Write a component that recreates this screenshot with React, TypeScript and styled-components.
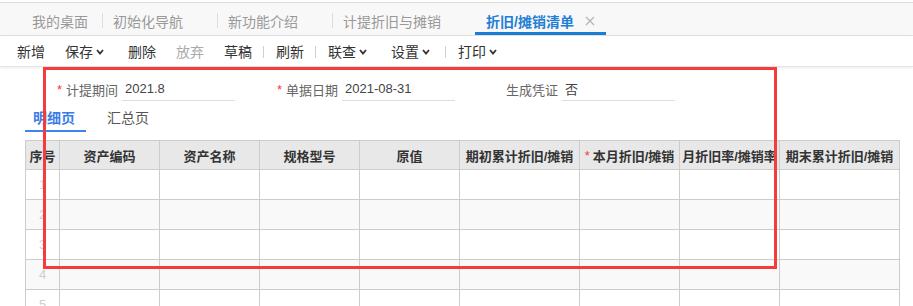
import React from "react";
import styled, { createGlobalStyle } from "styled-components";

const GlobalStyle = createGlobalStyle`
  html, body {
    margin: 0;
    padding: 0;
    background: #fff;
  }
  body {
    font-family: "Liberation Sans", "Noto Sans CJK SC", sans-serif;
    color: #333;
  }
`;

const Page = styled.div`
  position: relative;
  width: 913px;
  height: 306px;
  overflow: hidden;
  padding-top: 2px;
  box-sizing: border-box;
`;

const TabBar = styled.div`
  display: flex;
  height: 34px;
  box-sizing: border-box;
  border-top: 1px solid #dcdcdc;
  border-bottom: 1px solid #e2e2e2;
  background: #f8f8f8;
  padding-left: 21px;
`;

const Tab = styled.div<{ $active?: boolean; $padRight: number; $padLeft: number }>`
  display: flex;
  align-items: center;
  height: 32px;
  box-sizing: border-box;
  padding: 6px ${({ $padRight }) => $padRight}px 0 ${({ $padLeft }) => $padLeft}px;
  border-bottom: 3px solid ${({ $active }) => ($active ? "#1a7fd4" : "transparent")};
  font-size: 14px;
  white-space: nowrap;
  color: ${({ $active }) => ($active ? "#1f7fd6" : "#999")};
  font-weight: ${({ $active }) => ($active ? "bold" : "normal")};
`;

const TabSep = styled.span`
  width: 1px;
  height: 15px;
  margin-top: 10px;
  background: #dddddd;
`;

const CloseIcon = styled.svg`
  margin-left: 11px;
`;

const Toolbar = styled.div`
  display: flex;
  align-items: center;
  height: 31px;
  box-sizing: border-box;
  padding-left: 7px;
  border-bottom: 1px solid #e4e4e4;
  box-shadow: 0 1px 3px rgba(0, 0, 0, 0.08);
`;

const ToolButton = styled.div<{ $disabled?: boolean; $drop?: boolean }>`
  display: flex;
  align-items: center;
  padding: 0 ${({ $drop }) => ($drop ? 14 : 10)}px 0 10px;
  font-size: 14px;
  white-space: nowrap;
  color: ${({ $disabled }) => ($disabled ? "#aaa" : "#333")};
`;

const Chevron = styled.svg`
  margin-left: 3px;
  margin-top: 1px;
`;

const ToolSep = styled.span`
  width: 1px;
  height: 12px;
  margin: 1px 2px 0 1px;
  background: #d0d0d0;
`;

const FormRow = styled.div`
  display: flex;
  padding: 10px 0 0 57px;
`;

const Field = styled.div`
  display: flex;
  align-items: center;
  width: 220px;
  height: 24px;
`;

const Star = styled.span<{ $hidden?: boolean }>`
  width: 9px;
  font-size: 13px;
  color: #f33;
  visibility: ${({ $hidden }) => ($hidden ? "hidden" : "visible")};
`;

const FieldLabel = styled.span`
  font-size: 13px;
  color: #666;
  white-space: nowrap;
`;

const FieldInput = styled.div`
  display: flex;
  align-items: center;
  width: 113px;
  height: 24px;
  margin-left: 4px;
  padding-left: 3px;
  box-sizing: border-box;
  border-bottom: 1px solid #dddddd;
  font-size: 13px;
  color: #444;
`;

const SubTabs = styled.div`
  display: flex;
  gap: 13px;
  margin: 2px 0 0 25px;
`;

const SubTab = styled.div<{ $active?: boolean }>`
  display: flex;
  align-items: center;
  height: 29px;
  box-sizing: border-box;
  padding: 0 11px 0 8px;
  border-bottom: 2px solid ${({ $active }) => ($active ? "#3d86f2" : "transparent")};
  font-size: 14px;
  color: ${({ $active }) => ($active ? "#3a7de6" : "#555")};
  font-weight: ${({ $active }) => ($active ? "bold" : "normal")};
`;

const Grid = styled.div`
  width: 875px;
  margin: 8px 0 0 25px;
  box-sizing: border-box;
  border-left: 1px solid #cccccc;
  border-top: 1px solid #cccccc;
`;

const GridRow = styled.div<{ $alt?: boolean }>`
  display: grid;
  grid-template-columns: 34px repeat(4, 100px) 120px 100px 100px 120px;
  background: ${({ $alt }) => ($alt ? "#f9f9f9" : "#fff")};
`;

const HeadCell = styled.div`
  display: flex;
  align-items: center;
  justify-content: center;
  height: 29px;
  box-sizing: border-box;
  border-right: 1px solid #cccccc;
  border-bottom: 1px solid #cccccc;
  background: #e8e8e8;
  font-size: 13px;
  font-weight: bold;
  color: #333;
  white-space: nowrap;
  overflow: hidden;
`;

const Cell = styled.div<{ $index?: boolean }>`
  display: flex;
  align-items: center;
  justify-content: center;
  height: 30px;
  box-sizing: border-box;
  border-right: 1px solid #cccccc;
  border-bottom: 1px solid #cccccc;
  font-size: 13px;
  color: ${({ $index }) => ($index ? "#cfcfcf" : "#333")};
`;

const RedStar = styled.span`
  color: #f33;
  font-weight: normal;
  margin-right: 3px;
`;

const Highlight = styled.div`
  position: absolute;
  left: 43px;
  top: 67px;
  width: 734px;
  height: 202px;
  box-sizing: border-box;
  border: 3px solid #f53b3b;
  pointer-events: none;
`;

const Down = () => (
  <Chevron width="8" height="6" viewBox="0 0 8 6">
    <polyline points="1,1 4,4.5 7,1" fill="none" stroke="#333" strokeWidth="1.8" />
  </Chevron>
);

const columns = ["资产编码", "资产名称", "规格型号", "原值", "期初累计折旧/摊销"];

export default function App() {
  return (
    <Page>
      <GlobalStyle />
      <TabBar>
        <Tab $padLeft={11} $padRight={14}>我的桌面</Tab>
        <TabSep />
        <Tab $padLeft={10} $padRight={34}>初始化导航</Tab>
        <TabSep />
        <Tab $padLeft={10} $padRight={34}>新功能介绍</Tab>
        <TabSep />
        <Tab $padLeft={10} $padRight={34}>计提折旧与摊销</Tab>
        <Tab $active $padLeft={11} $padRight={11}>
          折旧/摊销清单
          <CloseIcon width="10" height="10" viewBox="0 0 10 10">
            <path d="M1 1L9 9M9 1L1 9" stroke="#b5b5b5" strokeWidth="1.3" />
          </CloseIcon>
        </Tab>
      </TabBar>

      <Toolbar>
        <ToolButton>新增</ToolButton>
        <ToolButton $drop>保存<Down /></ToolButton>
        <ToolButton>删除</ToolButton>
        <ToolButton $disabled>放弃</ToolButton>
        <ToolButton>草稿</ToolButton>
        <ToolSep />
        <ToolButton>刷新</ToolButton>
        <ToolSep />
        <ToolButton $drop>联查<Down /></ToolButton>
        <ToolButton $drop>设置<Down /></ToolButton>
        <ToolSep />
        <ToolButton $drop>打印<Down /></ToolButton>
      </Toolbar>

      <FormRow>
        <Field>
          <Star>*</Star>
          <FieldLabel>计提期间</FieldLabel>
          <FieldInput>2021.8</FieldInput>
        </Field>
        <Field>
          <Star>*</Star>
          <FieldLabel>单据日期</FieldLabel>
          <FieldInput>2021-08-31</FieldInput>
        </Field>
        <Field>
          <Star $hidden>*</Star>
          <FieldLabel>生成凭证</FieldLabel>
          <FieldInput>否</FieldInput>
        </Field>
      </FormRow>

      <SubTabs>
        <SubTab $active>明细页</SubTab>
        <SubTab>汇总页</SubTab>
      </SubTabs>

      <Grid>
        <GridRow>
          <HeadCell>序号</HeadCell>
          {columns.map((c) => (
            <HeadCell key={c}>{c}</HeadCell>
          ))}
          <HeadCell>
            <RedStar>*</RedStar>本月折旧/摊销
          </HeadCell>
          <HeadCell>月折旧率/摊销率</HeadCell>
          <HeadCell>期末累计折旧/摊销</HeadCell>
        </GridRow>
        {[1, 2, 3, 4, 5].map((n) => (
          <GridRow key={n} $alt={n % 2 === 0}>
            <Cell $index>{n}</Cell>
            {Array.from({ length: 8 }).map((_, i) => (
              <Cell key={i} />
            ))}
          </GridRow>
        ))}
      </Grid>

      <Highlight />
    </Page>
  );
}
